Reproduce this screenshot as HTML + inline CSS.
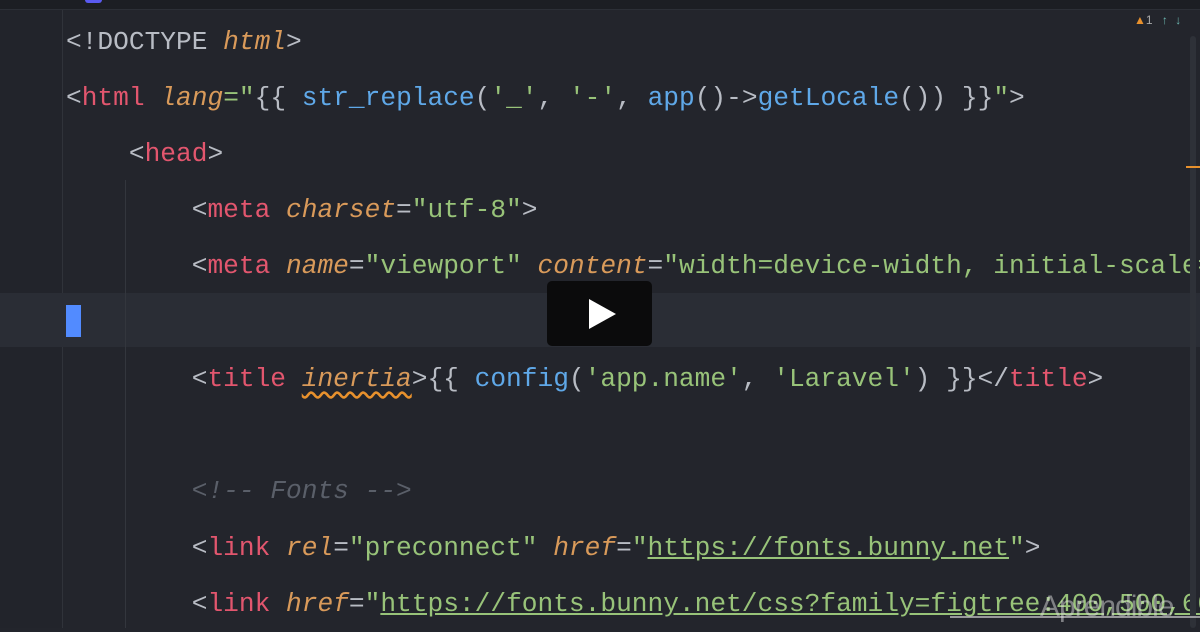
<!DOCTYPE html>
<html><head><style>
html,body{margin:0;padding:0}
body{width:1200px;height:628px;overflow:hidden;background:#23252c;position:relative;font-family:"Liberation Mono",monospace}
.top{position:absolute;left:0;top:0;width:1200px;height:9px;background:#1c1e23;border-bottom:1px solid #2c2f36}
.tab{position:absolute;left:85px;top:0;width:17px;height:3px;background:#5a5af0;border-radius:0 0 3px 3px}
.gut{position:absolute;left:0;top:10px;width:62px;height:618px;background:#22242b}
.gl{position:absolute;left:62px;top:10px;width:1px;height:618px;background:#30333a}
.ig{position:absolute;left:125px;top:180px;width:1px;height:448px;background:#33363d}
.cur{position:absolute;left:0;top:293px;width:1200px;height:54px;background:#2a2d35}
.caret{position:absolute;left:66px;top:305px;width:15px;height:32px;background:#528bff}
.l{position:absolute;left:66px;font-size:26.2px;line-height:56px;height:56px;white-space:pre;color:#b8bcc4;letter-spacing:0}
.t{color:#e2566e}.a{color:#d99a5a;font-style:italic}.s{color:#98c379}.f{color:#5fa8e8}.c{color:#5a5f69;font-style:italic}.u{text-decoration:underline}
.w{text-decoration:underline wavy #e8912d;text-underline-offset:5px}
.play{position:absolute;left:547px;top:281px;width:105px;height:65px;background:#0b0b0c;border-radius:5px}
.play:after{content:"";position:absolute;left:42px;top:18px;border-left:27px solid #fff;border-top:15px solid transparent;border-bottom:15px solid transparent}
.sb{position:absolute;left:1190px;top:36px;width:6px;height:592px;background:#2e3138;border-radius:3px}
.mk{position:absolute;left:1186px;top:166px;width:14px;height:2px;background:#e8912d}
.warn{position:absolute;left:1134px;top:13px;font-family:"Liberation Sans",sans-serif;font-size:12px;color:#aaa}
.wm{position:absolute;left:1040px;top:590px;font-family:"Liberation Sans",sans-serif;font-size:30px;color:rgba(220,220,220,.5);letter-spacing:-1px}
.hl{position:absolute;left:950px;top:616px;width:250px;height:2px;background:rgba(230,230,230,.6)}
</style></head><body>
<div class="top"><div class="tab"></div></div>
<div class="gut"></div><div class="gl"></div>
<div class="cur"></div><div class="ig"></div>
<div class="caret"></div>
<div class="l" style="top:14px">&lt;!DOCTYPE <span class="a">html</span>&gt;</div>
<div class="l" style="top:70px">&lt;<span class="t">html</span> <span class="a">lang</span><span class="s">="</span>{{ <span class="f">str_replace</span>(<span class="s">'_'</span>, <span class="s">'-'</span>, <span class="f">app</span>()-&gt;<span class="f">getLocale</span>()) }}<span class="s">"</span>&gt;</div>
<div class="l" style="top:126px">    &lt;<span class="t">head</span>&gt;</div>
<div class="l" style="top:182px">        &lt;<span class="t">meta</span> <span class="a">charset</span>=<span class="s">"utf-8"</span>&gt;</div>
<div class="l" style="top:238px">        &lt;<span class="t">meta</span> <span class="a">name</span>=<span class="s">"viewport"</span> <span class="a">content</span>=<span class="s">"width=device-width, initial-scale=1"</span>&gt;</div>
<div class="l" style="top:351px">        &lt;<span class="t">title</span> <span class="a w">inertia</span>&gt;{{ <span class="f">config</span>(<span class="s">'app.name'</span>, <span class="s">'Laravel'</span>) }}&lt;/<span class="t">title</span>&gt;</div>
<div class="l" style="top:463px">        <span class="c">&lt;!-- Fonts --&gt;</span></div>
<div class="l" style="top:520px">        &lt;<span class="t">link</span> <span class="a">rel</span>=<span class="s">"preconnect"</span> <span class="a">href</span>=<span class="s">"<span class="u">https://fonts.bunny.net</span>"</span>&gt;</div>
<div class="l" style="top:576px">        &lt;<span class="t">link</span> <span class="a">href</span>=<span class="s">"<span class="u">https://fonts.bunny.net/css?family=figtree:400,500,600</span>"</span></div>
<div class="play"></div>
<div class="sb"></div><div class="mk"></div>
<div class="warn"><span style="color:#e8912d">▲</span>1 <span style="color:#6cb6b0;margin-left:6px">↑</span> <span style="color:#6cb6b0;margin-left:4px">↓</span></div>
<div class="wm">Aprendible</div>
<div class="hl"></div>
</body></html>
